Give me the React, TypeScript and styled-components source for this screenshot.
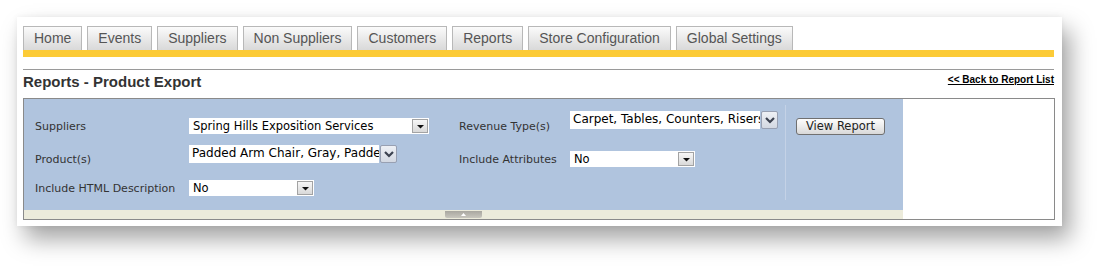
import { FC } from 'react'
import styled, { createGlobalStyle } from 'styled-components'

const GlobalStyle = createGlobalStyle`
  html, body {
    margin: 0;
    background: #fff;
  }
  body {
    padding: 17px 0 46px 17px;
    font-family: 'Liberation Sans', Arial, sans-serif;
  }
`

const Card = styled.div`
  width: 1045px;
  height: 209px;
  box-sizing: border-box;
  padding: 9px 7px 6px 6px;
  background: #fff;
  box-shadow: 8px 13px 22px rgba(0, 0, 0, 0.36), 0 0 6px rgba(0, 0, 0, 0.06);
`

const TabBar = styled.div`
  display: flex;
  gap: 5px;
  height: 24px;
`

const Tab = styled.div`
  box-sizing: border-box;
  height: 24px;
  padding: 0 10px;
  border: 1px solid #b8b8b8;
  border-bottom: none;
  background: linear-gradient(#fbfbfb, #e6e6e6 60%, #d9d9d9);
  color: #555;
  font-size: 14px;
  line-height: 23px;
  white-space: nowrap;
`

const YellowBar = styled.div`
  height: 7px;
  width: 1031px;
  background: #fccb37;
`

const Rule = styled.div`
  height: 1px;
  width: 1031px;
  margin-top: 12px;
  background: #9a9a9a;
`

const TitleRow = styled.div`
  display: flex;
  justify-content: space-between;
  align-items: center;
  height: 24px;
  margin-bottom: 4px;
  width: 1031px;
`

const Title = styled.h1`
  margin: 0 0 1px;
  font-size: 15px;
  font-weight: bold;
  color: #333;
`

const BackLink = styled.a`
  font-size: 10px;
  font-weight: bold;
  color: #000;
  text-decoration: underline;
  margin-bottom: 5px;
`

const Box = styled.div`
  display: flex;
  border: 1px solid #8a8a8a;
  background: #fff;
`

const LeftSide = styled.div`
  width: 879px;
  display: flex;
  flex-direction: column;
`

const BluePanel = styled.div`
  display: flex;
  background: #b0c4de;
  height: 111px;
`

const FormGrid = styled.div`
  display: grid;
  grid-template-columns: 154px 270px 111px 215px;
  grid-template-rows: 30px 28px 22px;
  row-gap: 4px;
  padding: 12px 0 11px 11px;
  font-family: 'DejaVu Sans', Verdana, sans-serif;
  font-size: 11px;
`

const Label = styled.div`
  align-self: center;
  color: #333;
  white-space: nowrap;
`

const Cell = styled.div<{ $top?: boolean }>`
  align-self: ${(p) => (p.$top ? 'start' : 'center')};
`

const ButtonCol = styled.div`
  flex: 1;
  margin: 6px 0 10px;
  padding: 11px 0 0 10px;
  border-left: 1px solid #c4d2e6;
`

const ViewButton = styled.button`
  box-sizing: border-box;
  width: 89px;
  height: 17px;
  padding: 0;
  border: 1px solid #707070;
  border-radius: 3px;
  background: linear-gradient(#fdfdfd, #ececec 50%, #d8d8d8);
  font-family: 'DejaVu Sans', Verdana, sans-serif;
  font-size: 11.5px;
  line-height: 15px;
  color: #222;
`

const BeigeStrip = styled.div`
  height: 9px;
  background: #ecebdb;
  display: flex;
  justify-content: center;
`

const Handle = styled.div`
  width: 37px;
  height: 7px;
  margin-top: 1px;
  background: linear-gradient(#a9a7a0, #c8c6be);
  border-radius: 0 0 2px 2px;
  display: flex;
  align-items: center;
  justify-content: center;
`

const Classic = styled.div<{ $w: number }>`
  box-sizing: border-box;
  width: ${(p) => p.$w}px;
  height: 16px;
  display: flex;
  align-items: center;
  background: #fff;
`

const Value = styled.div`
  flex: 1;
  padding-left: 4px;
  overflow: hidden;
  white-space: nowrap;
  color: #000;
  font-size: 11.5px;
  line-height: 16px;
`

const ArrowBtn = styled.div`
  box-sizing: border-box;
  width: 16px;
  height: 14px;
  margin-right: 1px;
  border: 1px solid #a3a3a3;
  background: linear-gradient(#f7f7f7, #d9d9d9);
  display: flex;
  align-items: center;
  justify-content: center;
`

const Multi = styled.div`
  display: flex;
  gap: 1px;
  height: 18px;
`

const MultiText = styled.div`
  width: 190px;
  height: 18px;
  background: #fff;
  padding-left: 3px;
  box-sizing: border-box;
  overflow: hidden;
  white-space: nowrap;
  line-height: 16px;
  font-size: 12px;
  color: #000;
`

const ChevBtn = styled.div`
  box-sizing: border-box;
  width: 17px;
  height: 18px;
  border: 1px solid #98a0b2;
  border-radius: 2px;
  background: linear-gradient(#eef0f5, #d3d8e2);
  display: flex;
  align-items: center;
  justify-content: center;
`

const ClassicSelect: FC<{ w: number; value: string }> = ({ w, value }) => (
  <Classic $w={w}>
    <Value>{value}</Value>
    <ArrowBtn>
      <svg width="7" height="5" viewBox="0 0 7 5">
        <path d="M0 1h7L3.5 4.5z" fill="#111" />
      </svg>
    </ArrowBtn>
  </Classic>
)

const MultiSelect: FC<{ value: string }> = ({ value }) => (
  <Multi>
    <MultiText>{value}</MultiText>
    <ChevBtn>
      <svg width="10" height="8" viewBox="0 0 10 8">
        <path d="M1 2l4 4 4-4" fill="none" stroke="#3c4250" strokeWidth="2.2" />
      </svg>
    </ChevBtn>
  </Multi>
)

const tabs = [
  'Home',
  'Events',
  'Suppliers',
  'Non Suppliers',
  'Customers',
  'Reports',
  'Store Configuration',
  'Global Settings',
]

export default function App() {
  return (
    <>
      <GlobalStyle />
      <Card>
        <TabBar>
          {tabs.map((t) => (
            <Tab key={t}>{t}</Tab>
          ))}
        </TabBar>
        <YellowBar />
        <Rule />
        <TitleRow>
          <Title>Reports - Product Export</Title>
          <BackLink href="#">&lt;&lt; Back to Report List</BackLink>
        </TitleRow>
        <Box>
          <LeftSide>
            <BluePanel>
              <FormGrid>
                <Label>Suppliers</Label>
                <Cell>
                  <ClassicSelect w={240} value="Spring Hills Exposition Services" />
                </Cell>
                <Label>Revenue Type(s)</Label>
                <Cell $top>
                  <MultiSelect value="Carpet, Tables, Counters, Risers" />
                </Cell>

                <Label>Product(s)</Label>
                <Cell $top>
                  <MultiSelect value="Padded Arm Chair, Gray, Padded" />
                </Cell>
                <Label>Include Attributes</Label>
                <Cell>
                  <ClassicSelect w={125} value="No" />
                </Cell>

                <Label>Include HTML Description</Label>
                <Cell>
                  <ClassicSelect w={125} value="No" />
                </Cell>
              </FormGrid>
              <ButtonCol>
                <ViewButton>View Report</ViewButton>
              </ButtonCol>
            </BluePanel>
            <BeigeStrip>
              <Handle>
                <svg width="5" height="3" viewBox="0 0 5 3">
                  <path d="M0 3L2.5 0 5 3z" fill="#fff" />
                </svg>
              </Handle>
            </BeigeStrip>
          </LeftSide>
        </Box>
      </Card>
    </>
  )
}
